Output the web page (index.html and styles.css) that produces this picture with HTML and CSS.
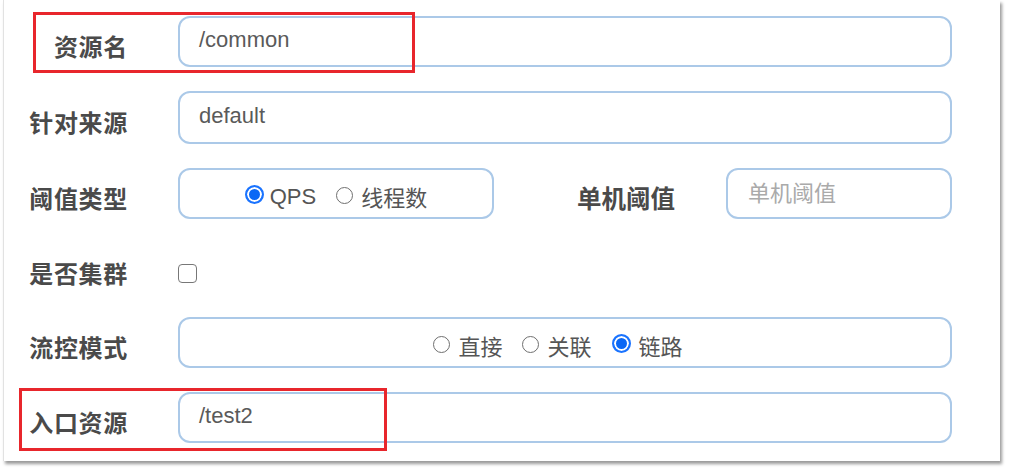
FILE: index.html
```html
<!DOCTYPE html>
<html lang="zh-CN">
<head>
<meta charset="utf-8">
<title>流控规则</title>
<link rel="stylesheet" href="styles.css">
</head>
<body>
<div class="panel">
  <form class="form">
    <label class="lbl">资源名</label>
    <div class="field"><span class="value">/common</span></div>

    <label class="lbl">针对来源</label>
    <div class="field"><span class="value">default</span></div>

    <label class="lbl">阈值类型</label>
    <div class="split">
      <div class="field radios short">
        <span class="radio on"></span><span class="rtext latin">QPS</span>
        <span class="radio"></span><span class="rtext">线程数</span>
      </div>
      <label class="lbl inner">单机阈值</label>
      <div class="field small"><span class="value ph">单机阈值</span></div>
    </div>

    <label class="lbl">是否集群</label>
    <div class="checkrow"><span class="checkbox"></span></div>

    <label class="lbl">流控模式</label>
    <div class="field radios mode">
      <span class="radio"></span><span class="rtext">直接</span>
      <span class="radio"></span><span class="rtext">关联</span>
      <span class="radio on"></span><span class="rtext">链路</span>
    </div>

    <label class="lbl">入口资源</label>
    <div class="field"><span class="value">/test2</span></div>
  </form>
  <div class="mark mark-1"></div>
  <div class="mark mark-2"></div>
</div>
</body>
</html>
```

FILE: styles.css
```css
* { box-sizing: border-box; }
html, body { margin: 0; padding: 0; background: #ffffff; }
body {
  width: 1010px;
  height: 469px;
  overflow: hidden;
  font-family: "Liberation Sans", "Noto Sans CJK SC", sans-serif;
}
.panel {
  position: relative;
  margin-left: 3px;
  width: 997px;
  height: 461px;
  background: #fff;
  border-left: 1px solid #e2e2e2;
  box-shadow: 2px 3px 3px rgba(0, 0, 0, 0.4);
}
.form {
  display: grid;
  grid-template-columns: 124px 774px;
  grid-template-rows: 51px 53px 51px 50px 51px 51px;
  column-gap: 50px;
  row-gap: 24px;
  padding-top: 16px;
}
.lbl {
  display: flex;
  align-items: center;
  justify-content: flex-end;
  padding-top: 8px;
  font-family: "Noto Sans CJK SC", sans-serif;
  font-weight: bold;
  font-size: 24px;
  letter-spacing: 0.7px;
  color: #4a4a4a;
  white-space: nowrap;
}
.field {
  display: flex;
  align-items: center;
  height: 100%;
  border: 2px solid #abc9e8;
  border-radius: 12px;
  padding-left: 19px;
  background: #fff;
}
.value {
  font-family: "Liberation Sans", "Noto Sans CJK SC", sans-serif;
  font-size: 22px;
  color: #5a5a5a;
  margin-top: -4px;
}
.value.ph {
  font-family: "Noto Sans CJK SC", sans-serif;
  color: #aaa;
  margin-top: -6px;
}
.split {
  display: flex;
  align-items: stretch;
}
.short { width: 316px; }
.lbl.inner { width: 100px; margin-left: 83px; justify-content: flex-start; letter-spacing: 0; font-size: 24.5px; }
.small { width: 226px; margin-left: 49px; padding-left: 20px; }
.radios {
  justify-content: center;
  padding-left: 0;
}
.mode { padding-right: 14px; }
.radio {
  width: 17px;
  height: 17px;
  border-radius: 50%;
  border: 1.5px solid #6f6f6f;
  background: #fff;
  flex: none;
  margin-top: 3px;
}
.radio.on {
  width: 19px;
  height: 19px;
  border: 2px solid #1a73ff;
  box-shadow: inset 0 0 0 2px #fff;
  background: #0b68f5;
  margin-top: 1px;
}
.rtext {
  font-family: "Noto Sans CJK SC", sans-serif;
  font-size: 22px;
  color: #555;
  margin-left: 8px;
  margin-right: 20px;
  line-height: 1;
  margin-top: 4px;
}
.rtext.latin { font-family: "Liberation Sans", sans-serif; margin-left: 6px; margin-top: 6px; }
.rtext:last-child { margin-right: 0; }
.checkrow { display: flex; align-items: flex-start; }
.checkbox {
  width: 19px;
  height: 19px;
  margin-top: 21px;
  border: 1.5px solid #777;
  border-radius: 4px;
  background: #fff;
}
.mark {
  position: absolute;
  border: 3px solid #e8262c;
  pointer-events: none;
}
.mark-1 { left: 29px; top: 12px; width: 382px; height: 61px; }
.mark-2 { left: 15px; top: 388px; width: 368px; height: 63px; }
```
